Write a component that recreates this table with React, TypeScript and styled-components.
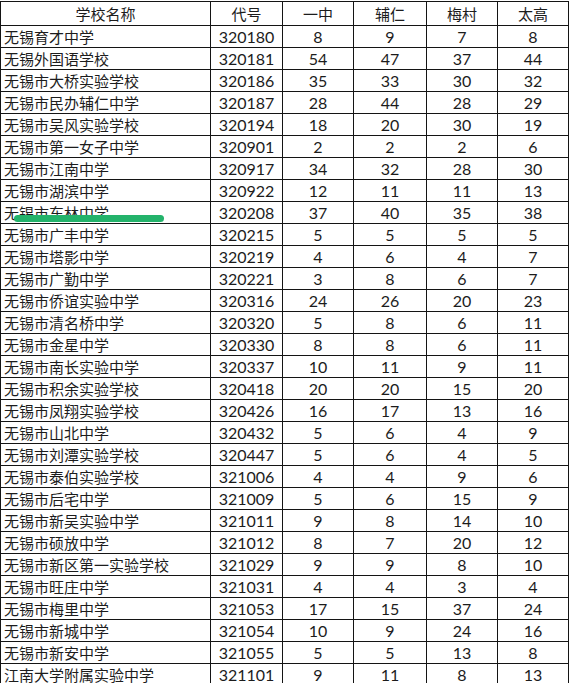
import React from "react";
import styled, { createGlobalStyle } from "styled-components";

const GlobalStyle = createGlobalStyle`
html, body {
  margin: 0;
  padding: 0;
  background: #fff;
}
body {
  font-family: "Lato", "Noto Sans CJK SC", sans-serif;
  color: #1c1c1c;
}
`

const rows: [string, string, number, number, number, number][] = [
    ["无锡育才中学", "320180", 8, 9, 7, 8],
    ["无锡外国语学校", "320181", 54, 47, 37, 44],
    ["无锡市大桥实验学校", "320186", 35, 33, 30, 32],
    ["无锡市民办辅仁中学", "320187", 28, 44, 28, 29],
    ["无锡市吴风实验学校", "320194", 18, 20, 30, 19],
    ["无锡市第一女子中学", "320901", 2, 2, 2, 6],
    ["无锡市江南中学", "320917", 34, 32, 28, 30],
    ["无锡市湖滨中学", "320922", 12, 11, 11, 13],
    ["无锡市东林中学", "320208", 37, 40, 35, 38],
    ["无锡市广丰中学", "320215", 5, 5, 5, 5],
    ["无锡市塔影中学", "320219", 4, 6, 4, 7],
    ["无锡市广勤中学", "320221", 3, 8, 6, 7],
    ["无锡市侨谊实验中学", "320316", 24, 26, 20, 23],
    ["无锡市清名桥中学", "320320", 5, 8, 6, 11],
    ["无锡市金星中学", "320330", 8, 8, 6, 11],
    ["无锡市南长实验中学", "320337", 10, 11, 9, 11],
    ["无锡市积余实验学校", "320418", 20, 20, 15, 20],
    ["无锡市凤翔实验学校", "320426", 16, 17, 13, 16],
    ["无锡市山北中学", "320432", 5, 6, 4, 9],
    ["无锡市刘潭实验学校", "320447", 5, 6, 4, 5],
    ["无锡市泰伯实验学校", "321006", 4, 4, 9, 6],
    ["无锡市后宅中学", "321009", 5, 6, 15, 9],
    ["无锡市新吴实验中学", "321011", 9, 8, 14, 10],
    ["无锡市硕放中学", "321012", 8, 7, 20, 12],
    ["无锡市新区第一实验学校", "321029", 9, 9, 8, 10],
    ["无锡市旺庄中学", "321031", 4, 4, 3, 4],
    ["无锡市梅里中学", "321053", 17, 15, 37, 24],
    ["无锡市新城中学", "321054", 10, 9, 24, 16],
    ["无锡市新安中学", "321055", 5, 5, 13, 8],
    ["江南大学附属实验中学", "321101", 9, 11, 8, 13],
]

const widths = [210, 72, 71, 73, 71, 71]
const heads = ["学校名称", "代号", "一中", "辅仁", "梅村", "太高"]

const App = () => {
    return (
        <>
            <GlobalStyle />
            <Page>
                <Sheet>
                    <colgroup>
                        {widths.map((w, i) => <col key={i} style={{ width: w }} />)}
                    </colgroup>
                    <thead>
                        <tr>
                            {heads.map(h => <Head key={h}>{h}</Head>)}
                        </tr>
                    </thead>
                    <tbody>
                        {rows.map(r => (
                            <tr key={r[1]}>
                                <Cell left>{r[0]}</Cell>
                                <Cell>{r[1]}</Cell>
                                <Cell>{r[2]}</Cell>
                                <Cell>{r[3]}</Cell>
                                <Cell>{r[4]}</Cell>
                                <Cell>{r[5]}</Cell>
                            </tr>
                        ))}
                    </tbody>
                </Sheet>
                <Marker />
            </Page>
        </>
    )
}

const Page = styled.div`
position: relative;
width: 570px;
height: 683px;
overflow: hidden;
padding-top: 1px;
box-sizing: border-box;
`
const Sheet = styled.table`
border-collapse: collapse;
table-layout: fixed;
width: 568px;
`
const Head = styled.th`
height: 23px;
padding: 0;
border: 1.5px solid #141414;
font-weight: 400;
font-size: 15px;
line-height: 20px;
text-align: center;
`
const Cell = styled.td<{ left?: boolean }>`
height: 21px;
padding: 0 0 0 ${p => (p.left ? "3px" : "0")};
border: 1.5px solid #141414;
font-size: ${p => (p.left ? "15px" : "16px")};
line-height: 20px;
white-space: nowrap;
text-align: ${p => (p.left ? "left" : "center")};
`
const Marker = styled.div`
position: absolute;
left: 14px;
top: 215px;
width: 150px;
height: 7px;
border-radius: 4px;
background: #23b36b;
`

export default App
